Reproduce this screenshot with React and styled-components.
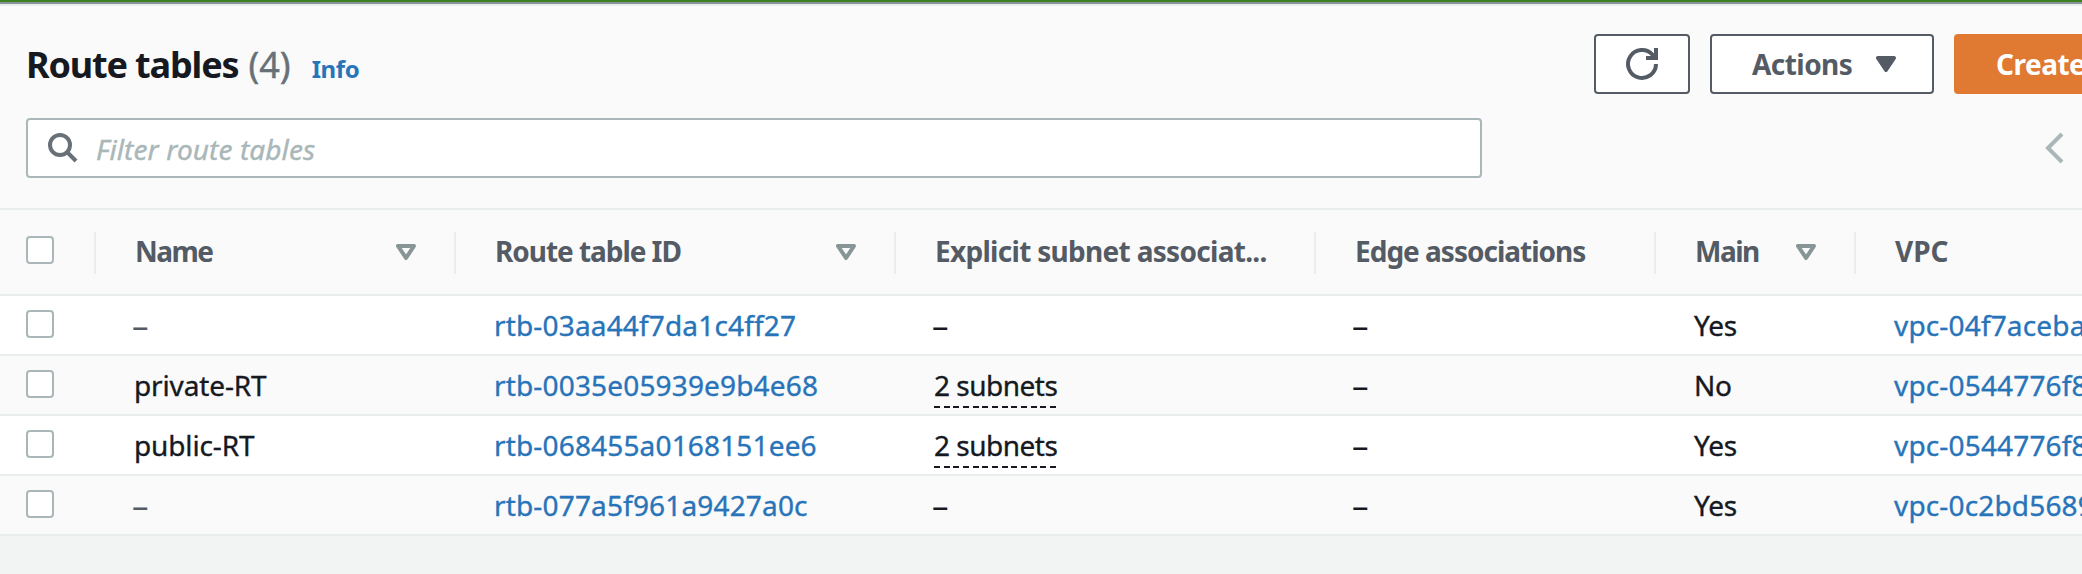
import React from 'react';
import styled, { createGlobalStyle } from 'styled-components';

const GlobalStyle = createGlobalStyle`
  * { box-sizing: border-box; }
  body {
    margin: 0;
    background: #f2f3f3;
    overflow: hidden;
    font-family: "Noto Sans", sans-serif;
    font-size: 28px;
    line-height: 40px;
    color: #16191f;
  }
  button, input { font: inherit; }
`;

const Page = styled.main`
  width: 100vw;
  height: 574px;
  overflow: hidden;
`;

const TopEdge = styled.div`
  height: 6px;
  background: #3f7f24;
  border-bottom: 2px solid #eaeded;
  box-shadow: inset 0 -2px 0 #879596;
`;

const Panel = styled.section`
  background: #fafafa;
`;

const Fit = styled.span`
  white-space: pre;
  letter-spacing: ${(p) => p.$track || 0}px;
`;

const Toolbar = styled.header`
  display: flex;
  justify-content: space-between;
  height: 88px;
  padding: 28px 0 0 26px;
`;

const Heading = styled.div`
  display: flex;
  align-items: baseline;
  height: 62px;
  line-height: 62px;
`;

const Title = styled.h1`
  margin: 0;
  font-size: 36px;
  font-weight: 700;
`;

const Count = styled.span`
  margin-left: 10px;
  font-size: 36px;
  color: #687078;
  -webkit-text-stroke: 0.4px;
`;

const InfoLink = styled.a`
  margin-left: 21px;
  font-size: 24px;
  font-weight: 700;
  letter-spacing: -0.4px;
  color: #2874b9;
`;

const Actions = styled.div`
  display: flex;
  flex: none;
  gap: 20px;
  width: 488px;
`;

const Button = styled.button`
  display: flex;
  flex: none;
  align-items: center;
  justify-content: ${(p) => (p.$center ? 'center' : 'flex-start')};
  width: ${(p) => p.$width}px;
  height: 60px;
  padding: ${(p) => (p.$center ? 0 : '0 0 1px 40px')};
  border: 2px solid ${(p) => (p.$primary ? '#e07932' : '#545b64')};
  border-radius: 4px;
  background: ${(p) => (p.$primary ? '#e07932' : '#fff')};
  color: ${(p) => (p.$primary ? '#fff' : '#545b64')};
  font-weight: 700;
  white-space: nowrap;
`;

const Caret = styled.svg`
  flex: none;
  width: 20px;
  height: 16px;
  margin-left: ${(p) => p.$gap || 0}px;
`;

const FilterRow = styled.div`
  display: flex;
  align-items: flex-start;
  justify-content: space-between;
  height: 114px;
  padding: 24px 18px 0 26px;
`;

const SearchBox = styled.label`
  display: flex;
  align-items: center;
  gap: 18px;
  width: 1456px;
  height: 60px;
  padding-left: 20px;
  border: 2px solid #aab7b8;
  border-radius: 4px;
  background: #fff;
`;

const SearchInput = styled.input`
  flex: 1;
  height: 40px;
  margin-top: 2px;
  padding: 0;
  border: 0;
  outline: 0;
  background: transparent;
  letter-spacing: 0.1px;
  &::placeholder {
    color: #aab7b8;
    font-style: italic;
    opacity: 1;
    -webkit-text-stroke: 0.4px;
  }
`;

const Chevron = styled.svg`
  width: 20px;
  height: 32px;
  margin-top: 14px;
`;

const Row = styled.div`
  display: grid;
  grid-template-columns: 96px 360px 440px 420px 340px 200px 400px;
  width: 2256px;
`;

const HeadRow = styled(Row)`
  height: 88px;
  padding-top: 22px;
  border: solid #eaeded;
  border-width: 2px 0;
  color: #545b64;
  font-weight: 700;
`;

const BodyRow = styled(Row)`
  height: 60px;
  border-bottom: 2px solid #eaeded;
  background: ${(p) => (p.$striped ? '#fafafa' : '#fff')};
  -webkit-text-stroke: 0.35px;
`;

const HeadCell = styled.div`
  display: flex;
  justify-content: space-between;
  height: 42px;
  padding: 0 38px 0 39px;
  border-right: 2px solid #eaeded;
  white-space: nowrap;
  line-height: 39px;
  &:first-child { padding: 4px 0 0 26px; }
  &:last-child { border: 0; }
  & > svg { margin-top: 12px; }
`;

const Cell = styled.div`
  padding: 9px 0 0 38px;
  white-space: nowrap;
  &:first-child { padding: 14px 0 0 26px; }
`;

const Checkbox = styled.span`
  display: block;
  width: 28px;
  height: 28px;
  border: 2px solid #aab7b8;
  border-radius: 4px;
  background: #fff;
`;

const Link = styled.a`
  color: #2874b9;
  letter-spacing: 0.16px;
`;

const Dash = styled.span`
  display: block;
  margin: 1px 0 0 -2px;
  font-size: 33px;
  -webkit-text-stroke: 0;
  color: ${(p) => (p.$muted ? '#545b64' : 'inherit')};
`;

const Subnets = styled.span`
  display: block;
  width: 122px;
  height: 43px;
  letter-spacing: -0.5px;
  background: repeating-linear-gradient(90deg, #16191f 0 6px, transparent 6px 9.67px) 0 100% / 100% 2px no-repeat;
`;

const SortIcon = () => (
  <Caret viewBox="0 0 20 16">
    <path d="M2 2h16l-8 12z" fill="none" stroke="#879596" strokeWidth="4" strokeLinejoin="round" />
  </Caret>
);

const columns = [
  { label: 'Name', sort: true, track: -1.5 },
  { label: 'Route table ID', sort: true, track: -1.05 },
  { label: 'Explicit subnet associat...', track: -0.7 },
  { label: 'Edge associations', track: -1 },
  { label: 'Main', sort: true, track: -1.5 },
  { label: 'VPC', track: 0 },
];

const routes = [
  { id: 'rtb-03aa44f7da1c4ff27', main: 'Yes', vpc: 'vpc-04f7aceba' },
  { name: 'private-RT', id: 'rtb-0035e05939e9b4e68', subnets: '2 subnets', main: 'No', vpc: 'vpc-0544776f8' },
  { name: 'public-RT', id: 'rtb-068455a0168151ee6', subnets: '2 subnets', main: 'Yes', vpc: 'vpc-0544776f8' },
  { id: 'rtb-077a5f961a9427a0c', main: 'Yes', vpc: 'vpc-0c2bd5689' },
];

export default function App() {
  return (
    <Page>
      <GlobalStyle />
      <TopEdge />
      <Panel>
        <Toolbar>
          <Heading>
            <Title><Fit $track={-1.15}>Route tables</Fit></Title>
            <Count>(4)</Count>
            <InfoLink>Info</InfoLink>
          </Heading>
          <Actions>
            <Button $width={96} $center aria-label="Refresh">
              <svg width="36" height="36" viewBox="0 0 36 36" fill="none" stroke="#545b64" strokeWidth="4">
                <path d="M32 18a14 14 0 1 1-3.5-9.3L32 12" />
                <path d="M32 2v10H22" />
              </svg>
            </Button>
            <Button $width={224}>
              <Fit $track={-0.55}>Actions</Fit>
              <Caret viewBox="0 0 20 16" $gap={24}>
                <path d="M2 2h16l-8 12z" fill="#545b64" stroke="#545b64" strokeWidth="4" strokeLinejoin="round" />
              </Caret>
            </Button>
            <Button $width={300} $primary><Fit $track={-0.5}>Create route table</Fit></Button>
          </Actions>
        </Toolbar>
        <FilterRow>
          <SearchBox>
            <svg width="30" height="30" viewBox="0 0 30 30" fill="none" stroke="#687078" strokeWidth="4">
              <circle cx="12" cy="12" r="10" />
              <path d="M19 19l9 9" />
            </svg>
            <SearchInput placeholder="Filter route tables" />
          </SearchBox>
          <Chevron viewBox="0 0 20 32" fill="none" stroke="#aab7b8" strokeWidth="4">
            <path d="M18 2L4 16l14 14" />
          </Chevron>
        </FilterRow>
        <HeadRow>
          <HeadCell><Checkbox /></HeadCell>
          {columns.map((c) => (
            <HeadCell key={c.label}>
              <Fit $track={c.track}>{c.label}</Fit>
              {c.sort && <SortIcon />}
            </HeadCell>
          ))}
        </HeadRow>
        {routes.map((r, i) => (
          <BodyRow key={r.id} $striped={i % 2 === 1}>
            <Cell><Checkbox /></Cell>
            <Cell>{r.name ? <Fit $track={-0.13}>{r.name}</Fit> : <Dash $muted>–</Dash>}</Cell>
            <Cell><Link>{r.id}</Link></Cell>
            <Cell>{r.subnets ? <Subnets>{r.subnets}</Subnets> : <Dash>–</Dash>}</Cell>
            <Cell><Dash>–</Dash></Cell>
            <Cell><Fit $track={-0.3}>{r.main}</Fit></Cell>
            <Cell><Link>{r.vpc}</Link></Cell>
          </BodyRow>
        ))}
      </Panel>
    </Page>
  );
}
